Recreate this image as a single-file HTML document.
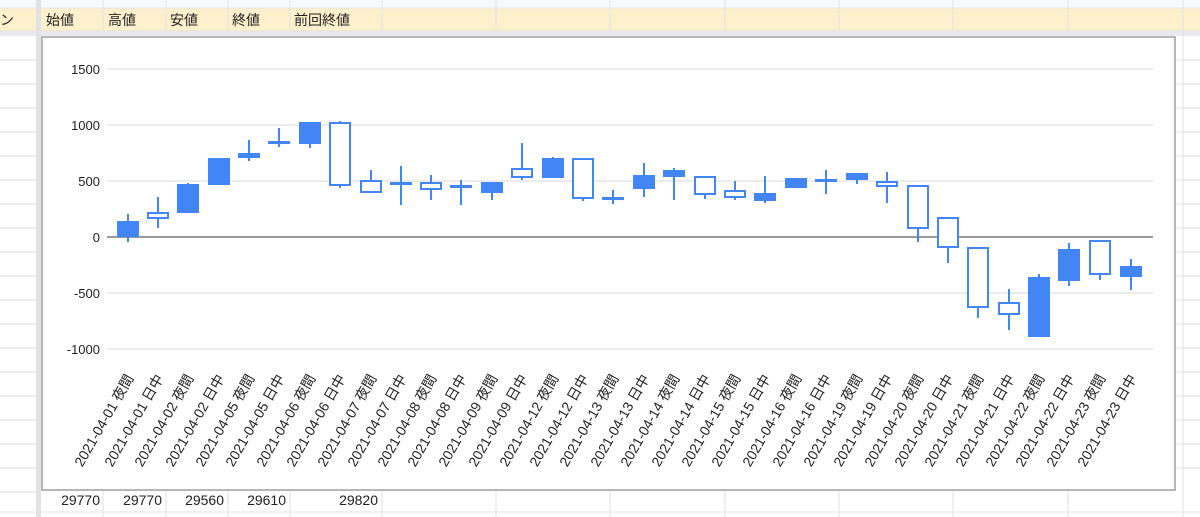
<!DOCTYPE html>
<html><head><meta charset="utf-8"><style>
body{margin:0;width:1200px;height:517px;overflow:hidden;background:#fff;font-family:"Liberation Sans","Noto Sans CJK JP",sans-serif;}
</style></head><body>
<svg width="1200" height="517" xmlns="http://www.w3.org/2000/svg" style="position:absolute;left:0;top:0;font-family:'Liberation Sans','Noto Sans CJK JP',sans-serif">
<rect x="0" y="0" width="1200" height="8" fill="#f8f9fa"/>
<rect x="0" y="8" width="1200" height="23" fill="#fdf0cc"/>
<rect x="0" y="31" width="1200" height="5" fill="#e8eaed"/>
<rect x="36" y="0" width="5" height="517" fill="#e0e2e5"/>
<g stroke="#e2e2e2" stroke-width="1">
<line x1="0" y1="8" x2="1200" y2="8"/>
<line x1="0" y1="31" x2="1200" y2="31"/>
<line x1="0" y1="60" x2="36" y2="60"/><line x1="0" y1="84" x2="36" y2="84"/><line x1="0" y1="108" x2="36" y2="108"/><line x1="0" y1="132" x2="36" y2="132"/><line x1="0" y1="156" x2="36" y2="156"/><line x1="0" y1="180" x2="36" y2="180"/><line x1="0" y1="204" x2="36" y2="204"/><line x1="0" y1="228" x2="36" y2="228"/><line x1="0" y1="252" x2="36" y2="252"/><line x1="0" y1="276" x2="36" y2="276"/><line x1="0" y1="300" x2="36" y2="300"/><line x1="0" y1="324" x2="36" y2="324"/><line x1="0" y1="348" x2="36" y2="348"/><line x1="0" y1="372" x2="36" y2="372"/><line x1="0" y1="396" x2="36" y2="396"/><line x1="0" y1="420" x2="36" y2="420"/><line x1="0" y1="444" x2="36" y2="444"/><line x1="0" y1="468" x2="36" y2="468"/><line x1="0" y1="492" x2="36" y2="492"/>
<line x1="1177" y1="60" x2="1200" y2="60"/><line x1="1177" y1="84" x2="1200" y2="84"/><line x1="1177" y1="108" x2="1200" y2="108"/><line x1="1177" y1="132" x2="1200" y2="132"/><line x1="1177" y1="156" x2="1200" y2="156"/><line x1="1177" y1="180" x2="1200" y2="180"/><line x1="1177" y1="204" x2="1200" y2="204"/><line x1="1177" y1="228" x2="1200" y2="228"/><line x1="1177" y1="252" x2="1200" y2="252"/><line x1="1177" y1="276" x2="1200" y2="276"/><line x1="1177" y1="300" x2="1200" y2="300"/><line x1="1177" y1="324" x2="1200" y2="324"/><line x1="1177" y1="348" x2="1200" y2="348"/><line x1="1177" y1="372" x2="1200" y2="372"/><line x1="1177" y1="396" x2="1200" y2="396"/><line x1="1177" y1="420" x2="1200" y2="420"/><line x1="1177" y1="444" x2="1200" y2="444"/><line x1="1177" y1="468" x2="1200" y2="468"/>
<line x1="0" y1="512" x2="1200" y2="512"/>
<line x1="103" y1="0" x2="103" y2="31"/><line x1="166" y1="0" x2="166" y2="31"/><line x1="228" y1="0" x2="228" y2="31"/><line x1="290" y1="0" x2="290" y2="31"/><line x1="382" y1="0" x2="382" y2="31"/><line x1="496" y1="0" x2="496" y2="31"/><line x1="610" y1="0" x2="610" y2="31"/><line x1="725" y1="0" x2="725" y2="31"/><line x1="839" y1="0" x2="839" y2="31"/><line x1="953" y1="0" x2="953" y2="31"/><line x1="1068" y1="0" x2="1068" y2="31"/><line x1="1183" y1="0" x2="1183" y2="517"/>
<line x1="103" y1="490" x2="103" y2="517"/><line x1="166" y1="490" x2="166" y2="517"/><line x1="228" y1="490" x2="228" y2="517"/><line x1="290" y1="490" x2="290" y2="517"/><line x1="382" y1="490" x2="382" y2="517"/><line x1="496" y1="490" x2="496" y2="517"/><line x1="610" y1="490" x2="610" y2="517"/><line x1="725" y1="490" x2="725" y2="517"/><line x1="839" y1="490" x2="839" y2="517"/><line x1="953" y1="490" x2="953" y2="517"/><line x1="1068" y1="490" x2="1068" y2="517"/>
</g>
<g font-size="14" fill="#222">
<text x="0" y="25">ン</text>
<text x="46" y="25">始値</text><text x="108" y="25">高値</text><text x="170" y="25">安値</text><text x="232" y="25">終値</text><text x="294" y="25">前回終値</text>
</g>
<g font-size="14" fill="#222" text-anchor="end">
<text x="100" y="505">29770</text><text x="162" y="505">29770</text><text x="224" y="505">29560</text><text x="286" y="505">29610</text><text x="378" y="505">29820</text>
</g>
<rect x="42" y="37" width="1133" height="453" fill="#fff" stroke="#9e9e9e" stroke-width="1.5"/>
<g stroke="#dadada" stroke-width="1">
<line x1="107" y1="69" x2="1153" y2="69"/><line x1="107" y1="125" x2="1153" y2="125"/><line x1="107" y1="181" x2="1153" y2="181"/><line x1="107" y1="293" x2="1153" y2="293"/><line x1="107" y1="349" x2="1153" y2="349"/>
</g>
<line x1="107" y1="237" x2="1153" y2="237" stroke="#333" stroke-width="1"/>
<g font-size="13" fill="#222" text-anchor="end">
<text x="100" y="74">1500</text><text x="100" y="130">1000</text><text x="100" y="186">500</text><text x="100" y="242">0</text><text x="100" y="298">-500</text><text x="100" y="354">-1000</text>
</g>
<g stroke="#4285f4" stroke-width="2">
<line x1="128" y1="214" x2="128" y2="242"/><line x1="158" y1="197" x2="158" y2="228"/><line x1="188" y1="183" x2="188" y2="213"/><line x1="219" y1="158" x2="219" y2="185"/><line x1="249" y1="140" x2="249" y2="161"/><line x1="279" y1="128" x2="279" y2="147"/><line x1="310" y1="122" x2="310" y2="148"/><line x1="340" y1="121" x2="340" y2="188"/><line x1="371" y1="170" x2="371" y2="192"/><line x1="401" y1="166" x2="401" y2="205"/><line x1="431" y1="175" x2="431" y2="200"/><line x1="461" y1="180" x2="461" y2="205"/><line x1="492" y1="182" x2="492" y2="200"/><line x1="522" y1="143" x2="522" y2="180"/><line x1="553" y1="157" x2="553" y2="178"/><line x1="583" y1="159" x2="583" y2="201"/><line x1="613" y1="190" x2="613" y2="204"/><line x1="644" y1="163" x2="644" y2="197"/><line x1="674" y1="168" x2="674" y2="200"/><line x1="705" y1="177" x2="705" y2="199"/><line x1="735" y1="181" x2="735" y2="200"/><line x1="765" y1="176" x2="765" y2="203"/><line x1="796" y1="178" x2="796" y2="188"/><line x1="826" y1="170" x2="826" y2="194"/><line x1="857" y1="173" x2="857" y2="184"/><line x1="887" y1="172" x2="887" y2="203"/><line x1="918" y1="186" x2="918" y2="242"/><line x1="948" y1="218" x2="948" y2="263"/><line x1="978" y1="248" x2="978" y2="318"/><line x1="1009" y1="289" x2="1009" y2="330"/><line x1="1039" y1="274" x2="1039" y2="320"/><line x1="1069" y1="243" x2="1069" y2="286"/><line x1="1100" y1="241" x2="1100" y2="280"/><line x1="1131" y1="259" x2="1131" y2="290"/>
</g>
<g fill="#4285f4">
<rect x="117" y="221" width="22" height="16"/><rect x="177" y="184" width="22" height="29"/><rect x="208" y="158" width="22" height="27"/><rect x="238" y="153" width="22" height="5"/><rect x="268" y="141" width="22" height="3"/><rect x="299" y="122" width="22" height="22"/><rect x="390" y="182" width="22" height="3"/><rect x="450" y="185" width="22" height="3"/><rect x="481" y="182" width="22" height="11"/><rect x="542" y="158" width="22" height="20"/><rect x="602" y="197" width="22" height="3"/><rect x="633" y="175" width="22" height="14"/><rect x="663" y="170" width="22" height="7"/><rect x="754" y="193" width="22" height="8"/><rect x="785" y="178" width="22" height="10"/><rect x="815" y="179" width="22" height="3"/><rect x="846" y="173" width="22" height="7"/><rect x="1028" y="277" width="22" height="60"/><rect x="1058" y="249" width="22" height="32"/><rect x="1120" y="266" width="22" height="11"/>
</g>
<g fill="#fff" stroke="#4285f4" stroke-width="2">
<rect x="148" y="213" width="20" height="5"/><rect x="330" y="123" width="20" height="62"/><rect x="361" y="181" width="20" height="11"/><rect x="421" y="183" width="20" height="6"/><rect x="512" y="169" width="20" height="8"/><rect x="573" y="159" width="20" height="39"/><rect x="695" y="177" width="20" height="17"/><rect x="725" y="191" width="20" height="6"/><rect x="877" y="182" width="20" height="4"/><rect x="908" y="186" width="20" height="42"/><rect x="938" y="218" width="20" height="29"/><rect x="968" y="248" width="20" height="59"/><rect x="999" y="303" width="20" height="11"/><rect x="1090" y="241" width="20" height="33"/>
</g>
<g font-size="14" fill="#222" text-anchor="end">
<text transform="translate(134,378) rotate(-60)">2021-04-01 夜間</text>
<text transform="translate(164,378) rotate(-60)">2021-04-01 日中</text>
<text transform="translate(194,378) rotate(-60)">2021-04-02 夜間</text>
<text transform="translate(225,378) rotate(-60)">2021-04-02 日中</text>
<text transform="translate(255,378) rotate(-60)">2021-04-05 夜間</text>
<text transform="translate(285,378) rotate(-60)">2021-04-05 日中</text>
<text transform="translate(316,378) rotate(-60)">2021-04-06 夜間</text>
<text transform="translate(346,378) rotate(-60)">2021-04-06 日中</text>
<text transform="translate(377,378) rotate(-60)">2021-04-07 夜間</text>
<text transform="translate(407,378) rotate(-60)">2021-04-07 日中</text>
<text transform="translate(437,378) rotate(-60)">2021-04-08 夜間</text>
<text transform="translate(467,378) rotate(-60)">2021-04-08 日中</text>
<text transform="translate(498,378) rotate(-60)">2021-04-09 夜間</text>
<text transform="translate(528,378) rotate(-60)">2021-04-09 日中</text>
<text transform="translate(559,378) rotate(-60)">2021-04-12 夜間</text>
<text transform="translate(589,378) rotate(-60)">2021-04-12 日中</text>
<text transform="translate(619,378) rotate(-60)">2021-04-13 夜間</text>
<text transform="translate(650,378) rotate(-60)">2021-04-13 日中</text>
<text transform="translate(680,378) rotate(-60)">2021-04-14 夜間</text>
<text transform="translate(711,378) rotate(-60)">2021-04-14 日中</text>
<text transform="translate(741,378) rotate(-60)">2021-04-15 夜間</text>
<text transform="translate(771,378) rotate(-60)">2021-04-15 日中</text>
<text transform="translate(802,378) rotate(-60)">2021-04-16 夜間</text>
<text transform="translate(832,378) rotate(-60)">2021-04-16 日中</text>
<text transform="translate(863,378) rotate(-60)">2021-04-19 夜間</text>
<text transform="translate(893,378) rotate(-60)">2021-04-19 日中</text>
<text transform="translate(924,378) rotate(-60)">2021-04-20 夜間</text>
<text transform="translate(954,378) rotate(-60)">2021-04-20 日中</text>
<text transform="translate(984,378) rotate(-60)">2021-04-21 夜間</text>
<text transform="translate(1015,378) rotate(-60)">2021-04-21 日中</text>
<text transform="translate(1045,378) rotate(-60)">2021-04-22 夜間</text>
<text transform="translate(1075,378) rotate(-60)">2021-04-22 日中</text>
<text transform="translate(1106,378) rotate(-60)">2021-04-23 夜間</text>
<text transform="translate(1137,378) rotate(-60)">2021-04-23 日中</text>
</g>
</svg>
</body></html>
